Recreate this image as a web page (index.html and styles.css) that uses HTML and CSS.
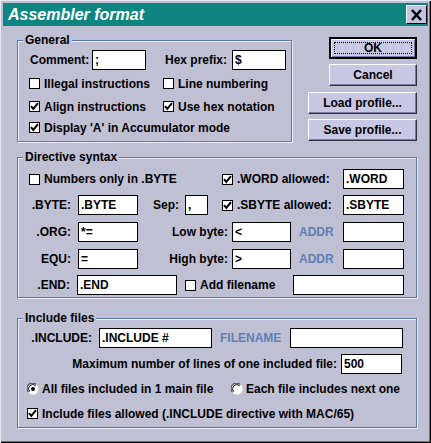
FILE: index.html
```html
<!DOCTYPE html>
<html>
<head>
<meta charset="utf-8">
<title>Assembler format</title>
<link rel="stylesheet" href="styles.css">
</head>
<body>
<div class="window">
  <div class="titlebar">
    <span class="title">Assembler format</span>
    <span class="close"><svg width="13" height="12" viewBox="0 0 13 12"><path d="M2 1 L11 11 M11 1 L2 11" stroke="#000" stroke-width="2.6" fill="none"/></svg></span>
  </div>
  <div class="main">
    <div class="top">
      <div class="group general">
        <div class="gtitle">General</div>
        <div class="row g1">
          <span class="lbl l-comment">Comment:</span><input class="field w54" value=";">
          <span class="lbl l-hex">Hex prefix:</span><input class="field w54" value="$">
        </div>
        <div class="crow g2">
          <span class="chk cw134"><span class="box"></span>Illegal instructions</span>
          <span class="chk"><span class="box"></span>Line numbering</span>
        </div>
        <div class="crow g3">
          <span class="chk cw134"><span class="box"><svg width="9" height="9" viewBox="0 0 9 9"><path d="M1 4.2 L3.3 7 L8 1.2" stroke="#000" stroke-width="2" fill="none"/></svg></span>Align instructions</span>
          <span class="chk"><span class="box"><svg width="9" height="9" viewBox="0 0 9 9"><path d="M1 4.2 L3.3 7 L8 1.2" stroke="#000" stroke-width="2" fill="none"/></svg></span>Use hex notation</span>
        </div>
        <div class="crow g4">
          <span class="chk"><span class="box"><svg width="9" height="9" viewBox="0 0 9 9"><path d="M1 4.2 L3.3 7 L8 1.2" stroke="#000" stroke-width="2" fill="none"/></svg></span>Display 'A' in Accumulator mode</span>
        </div>
      </div>
      <div class="buttons">
        <div class="btn w88 default"><span class="focus">OK</span></div>
        <div class="btn w88 b-cancel">Cancel</div>
        <div class="btn w109 b-load">Load profile...</div>
        <div class="btn w109 b-save">Save profile...</div>
      </div>
    </div>

    <div class="group directive">
      <div class="gtitle">Directive syntax</div>
      <div class="row d1">
        <span class="chk cw193"><span class="box"></span>Numbers only in .BYTE</span>
        <span class="chk cw121"><span class="box"><svg width="9" height="9" viewBox="0 0 9 9"><path d="M1 4.2 L3.3 7 L8 1.2" stroke="#000" stroke-width="2" fill="none"/></svg></span>.WORD allowed:</span>
        <input class="field w61" value=".WORD">
      </div>
      <div class="row d2">
        <span class="rl w42">.BYTE:</span><input class="field w60" value=".BYTE">
        <span class="lbl l-sep">Sep:</span><input class="field w23" value=",">
        <span class="chk cw121 ml14"><span class="box"><svg width="9" height="9" viewBox="0 0 9 9"><path d="M1 4.2 L3.3 7 L8 1.2" stroke="#000" stroke-width="2" fill="none"/></svg></span>.SBYTE allowed:</span>
        <input class="field w61" value=".SBYTE">
      </div>
      <div class="row d3">
        <span class="rl w42">.ORG:</span><input class="field w60" value="*=">
        <span class="rl2">Low byte:</span><input class="field w59" value="&lt;">
        <span class="addr">ADDR</span><input class="field w61" value="">
      </div>
      <div class="row d4">
        <span class="rl w42">EQU:</span><input class="field w60" value="=">
        <span class="rl2">High byte:</span><input class="field w59" value="&gt;">
        <span class="addr">ADDR</span><input class="field w61" value="">
      </div>
      <div class="row d5">
        <span class="rl w41">.END:</span><input class="field w100" value=".END">
        <span class="chk cw108 ml8"><span class="box"></span>Add filename</span>
        <input class="field w111" value="">
      </div>
    </div>

    <div class="group include">
      <div class="gtitle">Include files</div>
      <div class="row i1">
        <span class="rl w63">.INCLUDE:</span><input class="field w113" value=".INCLUDE #">
        <span class="addr fname">FILENAME</span><input class="field w113" value="">
      </div>
      <div class="row i2">
        <span class="rl w308">Maximum number of lines of one included file:</span><input class="field w61" value="500">
      </div>
      <div class="crow i3">
        <span class="radio rw204"><svg width="12" height="12" viewBox="0 0 12 12"><circle cx="6" cy="6" r="5.5" fill="#fff"/><path d="M1.6 9.2 A5 5 0 0 1 9.2 1.6" stroke="#505060" stroke-width="1.2" fill="none"/><path d="M2.8 8.6 A3.8 3.8 0 0 1 8.6 2.8" stroke="#000" stroke-width="1" fill="none"/><circle cx="6" cy="6" r="2" fill="#000"/></svg>All files included in 1 main file</span>
        <span class="radio"><svg width="12" height="12" viewBox="0 0 12 12"><circle cx="6" cy="6" r="5.5" fill="#fff"/><path d="M1.6 9.2 A5 5 0 0 1 9.2 1.6" stroke="#505060" stroke-width="1.2" fill="none"/><path d="M2.8 8.6 A3.8 3.8 0 0 1 8.6 2.8" stroke="#000" stroke-width="1" fill="none"/></svg>Each file includes next one</span>
      </div>
      <div class="crow i4">
        <span class="chk"><span class="box"><svg width="9" height="9" viewBox="0 0 9 9"><path d="M1 4.2 L3.3 7 L8 1.2" stroke="#000" stroke-width="2" fill="none"/></svg></span>Include files allowed (.INCLUDE directive with MAC/65)</span>
      </div>
    </div>
  </div>
</div>
</body>
</html>
```

FILE: styles.css
```css
html, body {
  margin: 0;
  padding: 0;
  background: #c0c0d4;
}
body {
  font-family: "Liberation Sans", Arial, sans-serif;
  font-size: 12px;
  font-weight: bold;
  color: #000;
}
.window {
  width: 431px;
  height: 443px;
  box-sizing: border-box;
  padding: 3px;
  box-shadow: inset 1px 1px 0 #e8e8f8, inset -1px -1px 0 #000, inset -2px -2px 0 #707090;
}
.titlebar {
  height: 23px;
  box-sizing: border-box;
  background: #0f8582;
  display: flex;
  align-items: center;
  justify-content: space-between;
  padding: 0 1px 0 5px;
}
.title {
  color: #fff;
  font-size: 16px;
  font-style: italic;
  font-weight: bold;
}
.close {
  width: 21px;
  height: 19px;
  box-sizing: border-box;
  background: #c4c4e0;
  border: 1px solid;
  border-color: #fff #000 #000 #fff;
  display: flex;
  align-items: center;
  justify-content: center;
}
.main {
  padding: 0 11px 0 14px;
}
.top {
  display: flex;
}
.group {
  box-sizing: border-box;
  border: 1px solid #5a78b0;
  box-shadow: inset 1px 1px 0 #eef0ff, 1px 1px 0 #eef0ff;
  padding: 0 0 0 11px;
}
.gtitle {
  width: fit-content;
  height: 13px;
  line-height: 13px;
  margin: -7px 0 0 -6px;
  padding: 0 2px;
  background: #c0c0d4;
}
.general {
  width: 276px;
  margin-top: 14px;
  padding-bottom: 6px;
}
.directive {
  width: 400px;
  margin-top: 15px;
  padding-bottom: 2px;
}
.include {
  width: 400px;
  margin-top: 20px;
  padding-bottom: 6px;
}
.row {
  display: flex;
  align-items: center;
  height: 20px;
}
.crow {
  display: flex;
  align-items: center;
  height: 15px;
}
.lbl, .rl, .rl2, .addr {
  display: inline-block;
  box-sizing: border-box;
  white-space: nowrap;
}
.field {
  appearance: none;
  -webkit-appearance: none;
  box-sizing: border-box;
  height: 20px;
  margin: 0;
  padding: 0 2px;
  border: 1px solid #000;
  border-radius: 0;
  background: #fff;
  font: inherit;
  color: #000;
  outline: none;
}
.w23 { width: 23px; }
.w54 { width: 54px; }
.w59 { width: 59px; }
.w60 { width: 60px; }
.w61 { width: 61px; }
.w100 { width: 100px; }
.w111 { width: 111px; }
.w113 { width: 113px; }

.g1 { margin-top: 3px; }
.g2 { margin-top: 6px; }
.g3 { margin-top: 8px; }
.g4 { margin-top: 6px; }
.l-comment { width: 63px; padding-left: 1px; }
.l-hex { width: 67px; margin-left: 19px; }

.chk, .radio {
  display: inline-flex;
  align-items: center;
  white-space: nowrap;
  box-sizing: border-box;
}
.chk .box {
  width: 11px;
  height: 11px;
  box-sizing: border-box;
  background: #fff;
  border: 1px solid #000;
  margin-right: 4px;
  display: inline-flex;
  align-items: center;
  justify-content: center;
  flex: none;
}
.radio svg {
  margin-right: 3px;
  flex: none;
}
.cw134 { width: 134px; }
.cw193 { width: 193px; }
.cw121 { width: 121px; }
.cw108 { width: 108px; }
.rw204 { width: 204px; }
.ml14 { margin-left: 14px; }
.ml8 { margin-left: 8px; }

.buttons {
  width: 109px;
  margin-left: 16px;
  padding-top: 11px;
  display: flex;
  flex-direction: column;
  align-items: flex-end;
}
.btn {
  height: 22px;
  box-sizing: border-box;
  display: flex;
  align-items: center;
  justify-content: center;
  background: #c8c8e4;
  border: 1px solid;
  border-color: #fff #303048 #303048 #fff;
  box-shadow: inset -1px -1px 0 #7878a0;
  white-space: nowrap;
}
.btn.w88 { width: 88px; }
.btn.w109 { width: 109px; }
.btn.default {
  border: 2px solid #000;
  box-shadow: inset 1px 1px 0 #fff, inset -1px -1px 0 #7878a0;
}
.focus {
  width: calc(100% - 6px);
  height: calc(100% - 6px);
  box-sizing: border-box;
  border: 1px dotted #000;
  display: flex;
  align-items: center;
  justify-content: center;
}
.b-cancel { margin-top: 5px; }
.b-load { margin-top: 6px; }
.b-save { margin-top: 5px; }

.d1 { margin-top: 5px; }
.d2 { margin-top: 6px; }
.d3 { margin-top: 7px; }
.d4 { margin-top: 7px; }
.d5 { margin-top: 6px; }
.rl { text-align: right; margin-right: 7px; }
.w41 { width: 41px; }
.w42 { width: 42px; }
.w63 { width: 63px; }
.w308 { width: 308px; margin-right: 4px; }
.l-sep { width: 32px; margin-left: 15px; }
.rl2 { width: 94px; text-align: right; padding-right: 4px; }
.addr { width: 44px; margin-left: 8px; color: #5f7fb7; }
.fname { width: 70px; }

.i1 { margin-top: 3px; }
.i2 { margin-top: 6px; }
.i3 { margin-top: 7px; margin-left: -2px; }
.i4 { margin-top: 10px; margin-left: -2px; }
```
